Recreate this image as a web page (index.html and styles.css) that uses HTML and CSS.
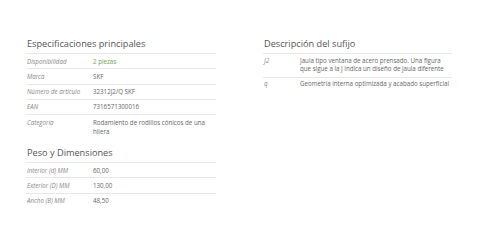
FILE: index.html
```html
<!DOCTYPE html>
<html lang="es">
<head>
<meta charset="utf-8">
<title>Especificaciones</title>
<link rel="stylesheet" href="styles.css">
</head>
<body>
<div class="page">
  <div class="col">
    <h2 class="title">Especificaciones principales</h2>
    <table class="spec">
      <tr><td class="lbl">Disponibilidad</td><td class="val stock">2 piezas</td></tr>
      <tr><td class="lbl">Marca</td><td class="val">SKF</td></tr>
      <tr><td class="lbl">Número de artículo</td><td class="val">32312J2/Q SKF</td></tr>
      <tr><td class="lbl">EAN</td><td class="val">7316571300016</td></tr>
      <tr><td class="lbl">Categoría</td><td class="val">Rodamiento de rodillos cónicos de una hilera</td></tr>
    </table>
    <h2 class="title second">Peso y Dimensiones</h2>
    <table class="spec">
      <tr><td class="lbl">Interior (d) MM</td><td class="val">60,00</td></tr>
      <tr><td class="lbl">Exterior (D) MM</td><td class="val">130,00</td></tr>
      <tr><td class="lbl">Ancho (B) MM</td><td class="val">48,50</td></tr>
    </table>
  </div>
  <div class="col">
    <h2 class="title">Descripción del sufijo</h2>
    <table class="spec suffix">
      <tr><td class="lbl">J2</td><td class="val">Jaula tipo ventana de acero prensado. Una figura que sigue a la J indica un diseño de jaula diferente</td></tr>
      <tr><td class="lbl">q</td><td class="val">Geometría interna optimizada y acabado superficial</td></tr>
    </table>
  </div>
</div>
</body>
</html>
```
FILE: styles.css
```css
html, body {
  margin: 0;
  padding: 0;
  background: #fff;
}
body {
  font-family: "Open Sans", "DejaVu Sans", sans-serif;
  color: #555;
}
.page {
  display: grid;
  grid-template-columns: 190px 189px;
  column-gap: 47px;
  padding: 38px 0 0 26px;
}
.col {
  display: flex;
  flex-direction: column;
}
.title {
  margin: 0 0 4px 1px;
  font-size: 9.2px;
  line-height: 11px;
  font-weight: 400;
  color: #555;
}
.title.second {
  margin-top: 8.5px;
}
.spec {
  width: 100%;
  border-collapse: collapse;
  font-size: 6.2px;
  line-height: 9.25px;
}
.spec td {
  border-top: 1px solid #e8e8e8;
  padding: 2.5px 0;
  vertical-align: top;
}
.lbl {
  width: 66px;
  padding-left: 1px !important;
  font-style: italic;
  color: #888;
}
.suffix {
  line-height: 8.75px;
}
.suffix .lbl {
  width: 36px;
}
.val {
  color: #666;
}
.stock {
  color: #6aa84f;
}
```
